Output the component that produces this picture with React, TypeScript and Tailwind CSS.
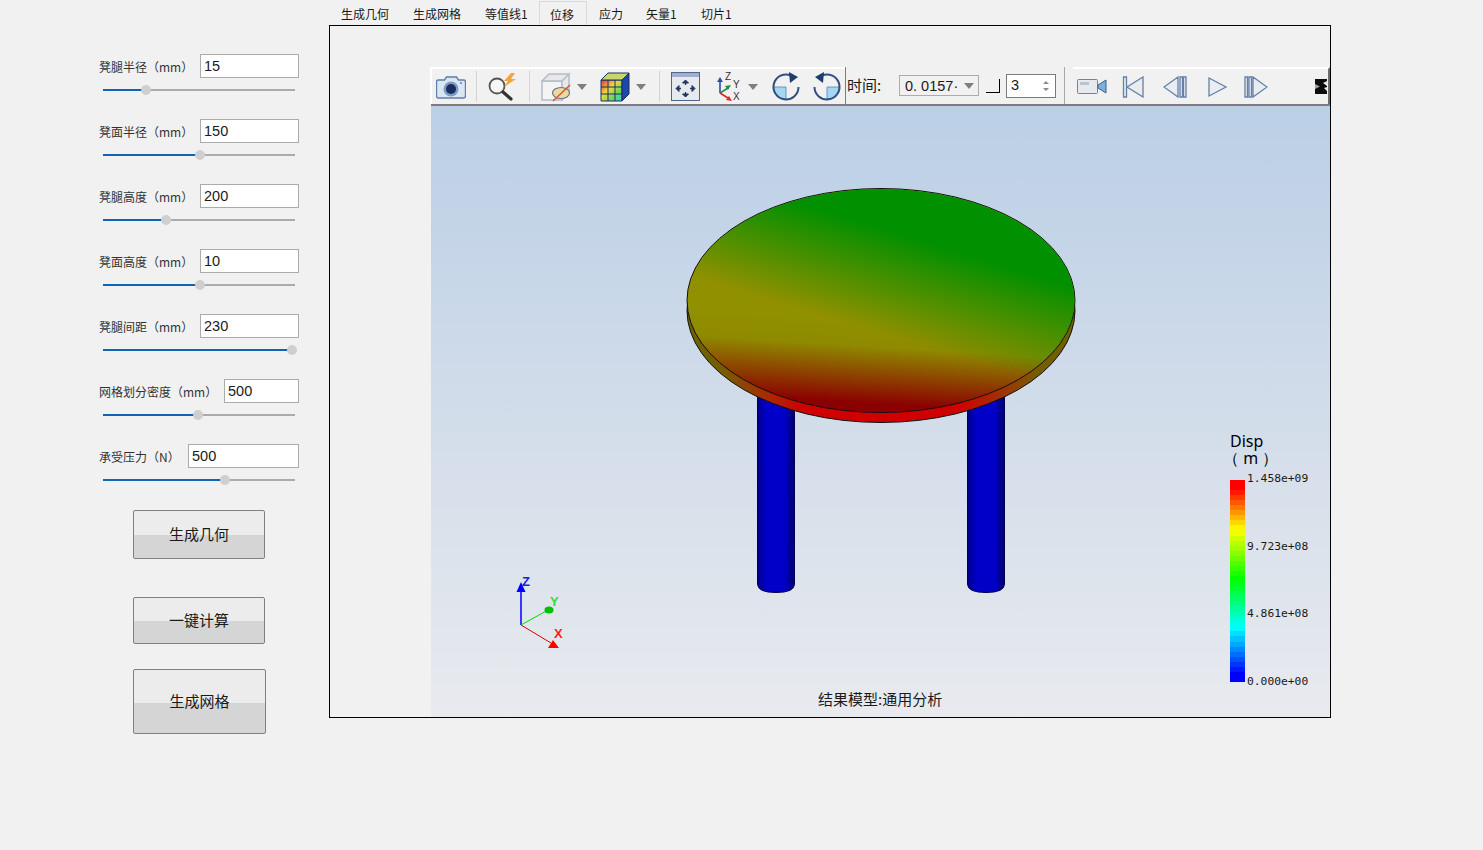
import React from "react";

const cjk = "font-['Noto_Sans_CJK_SC','Noto_Sans',sans-serif]";

const fields = [
  { label: "凳腿半径（mm）", value: "15", thumb: 43, w: "w-[99px]" },
  { label: "凳面半径（mm）", value: "150", thumb: 97, w: "w-[99px]" },
  { label: "凳腿高度（mm）", value: "200", thumb: 63, w: "w-[99px]" },
  { label: "凳面高度（mm）", value: "10", thumb: 97, w: "w-[99px]" },
  { label: "凳腿间距（mm）", value: "230", thumb: 189, w: "w-[99px]" },
  { label: "网格划分密度（mm）", value: "500", thumb: 95, w: "w-[75px]" },
  { label: "承受压力（N）", value: "500", thumb: 122, w: "w-[111px]" },
];

const tabs = [
  { name: "生成几何", cls: "w-[72px] pl-[12px]" },
  { name: "生成网格", cls: "w-[72px] pl-[12px]" },
  { name: "等值线1", cls: "w-[66px] pl-[12px]" },
  { name: "位移", cls: "w-[48px] pl-[10px] border border-b-0 border-[#d9d9d9]" },
  { name: "应力", cls: "w-[47px] pl-[12px]" },
  { name: "矢量1", cls: "w-[55px] pl-[12px]" },
  { name: "切片1", cls: "w-[54px] pl-[12px]" },
];

const ramp = [
  [0, [255, 0, 0]],
  [0.03, [255, 0, 0]],
  [0.24, [255, 255, 0]],
  [0.49, [0, 255, 0]],
  [0.74, [0, 255, 255]],
  [0.97, [0, 0, 255]],
  [1, [0, 0, 255]],
] as [number, number[]][];

function rampColor(t: number) {
  for (let i = 1; i < ramp.length; i++) {
    if (t <= ramp[i][0]) {
      const [t0, c0] = ramp[i - 1];
      const [t1, c1] = ramp[i];
      const k = (t - t0) / (t1 - t0 || 1);
      return `rgb(${c0.map((c, j) => Math.round(c + (c1[j] - c) * k)).join(",")})`;
    }
  }
  return "rgb(0,0,255)";
}

const legendBands = Array.from({ length: 40 }, (_, i) => rampColor(i / 39));

const Sep = ({ ml }: { ml: string }) => <div className={`${ml} w-px h-[31px] bg-[#d4d4d4] shrink-0`} />;

const Caret = ({ className }: { className: string }) => (
  <svg viewBox="0 0 10 6" className={`w-[10px] h-[6px] shrink-0 ${className}`}>
    <path d="M0 0h10L5 6z" fill="#7f7f7f" />
  </svg>
);

const CameraIcon = () => (
  <svg viewBox="0 0 30 26" className="w-[30px] h-[26px] shrink-0 ml-[4px]">
    <path d="M2 6h6l2-3h10l2 3h5a2 2 0 0 1 2 2v14a2 2 0 0 1-2 2H2a2 2 0 0 1-2-2V8a2 2 0 0 1 2-2z" transform="translate(.5 0)" fill="#dbe6f4" stroke="#5f7fa8" strokeWidth="1.4" />
    <circle cx="15" cy="15" r="7.5" fill="#7d9cc4" />
    <circle cx="15" cy="15" r="5" fill="#1b2f5e" />
    <circle cx="25" cy="9" r="1" fill="#5f7fa8" />
  </svg>
);

const SearchBoltIcon = () => (
  <svg viewBox="0 0 30 30" className="w-[30px] h-[30px] shrink-0 ml-[11px]">
    <circle cx="9" cy="14" r="7.500" fill="#f6f6f6" stroke="#555" strokeWidth="1.800" />
    <path d="M15 20l8 7" stroke="#333" strokeWidth="3.200" strokeLinecap="round" />
    <path d="M23 1l-7 8h4l-4 6 12-8h-5l4-6z" fill="#f0a43a" />
  </svg>
);

const ClipCubeIcon = () => (
  <svg viewBox="0 0 30 30" className="w-[30px] h-[30px] shrink-0 ml-[11px]">
    <path d="M1 9h20v19H1z" fill="#f4f4f4" stroke="#b4bcc8" strokeWidth="1.500" />
    <path d="M1 9l7-7h20l-7 7zM21 9l7-7v19l-7 7z" fill="#e8e8e8" stroke="#b4bcc8" strokeWidth="1.500" />
    <ellipse cx="20" cy="21" rx="8.500" ry="5.500" fill="#ecd9a0" stroke="#64748b" strokeWidth="1.200" />
    <path d="M12 29L29 13" stroke="#d8552b" strokeWidth="1.300" />
  </svg>
);

const ColorCubeIcon = () => (
  <svg viewBox="0 0 30 30" className="w-[30px] h-[30px] shrink-0 ml-[13px]">
    <defs>
      <linearGradient id="cubeFace" x1="0" y1="0" x2="1" y2="1">
        <stop offset="0" stopColor="#e0342c" />
        <stop offset="0.4" stopColor="#f2d83a" />
        <stop offset="0.7" stopColor="#6ed65a" />
        <stop offset="1" stopColor="#39c7e0" />
      </linearGradient>
    </defs>
    <path d="M1 8h21v21H1z" fill="url(#cubeFace)" stroke="#1d2f66" strokeWidth="1" />
    <path d="M1 8l7-7h21l-7 7z" fill="#c8d66a" stroke="#1d2f66" strokeWidth="1" />
    <path d="M22 8l7-7v21l-7 7z" fill="#1d47a8" stroke="#1d2f66" strokeWidth="1" />
    <path d="M8 8v21M15 8v21M1 15h21M1 22h21" stroke="#1d2f66" strokeWidth="1" />
  </svg>
);

const FitIcon = () => (
  <svg viewBox="0 0 30 29" className="w-[30px] h-[29px] shrink-0 ml-[11px]">
    <rect x=".5" y=".5" width="28" height="28" fill="#e6e9ee" stroke="#4f668c" />
    <rect x="1" y="1" width="27" height="4" fill="#9fb0c8" />
    <g fill="#1f3560" stroke="#1f3560" strokeWidth="1">
      <path d="M14.5 8l-3 3h6zM14.5 25l-3-3h6zM5 16.5l3-3v6zM24 16.5l-3-3v6z" />
    </g>
    <path d="M14.5 10v3M14.5 20v3M7 16.5h3M19 16.5h3" stroke="#1f3560" strokeWidth="1.300" />
  </svg>
);

const AxesIcon = () => (
  <svg viewBox="0 0 30 30" className="w-[30px] h-[30px] shrink-0 ml-[13px]">
    <path d="M6 21V9" stroke="#2b4fa8" strokeWidth="1.600" />
    <path d="M6 5l-3 5h6z" fill="#2b4fa8" />
    <path d="M6 21l8-5" stroke="#1f8f4a" strokeWidth="1.600" />
    <path d="M17 13l-6 1 3 4z" fill="#1f8f4a" />
    <path d="M6 21l8 5" stroke="#e0262b" strokeWidth="1.600" />
    <path d="M18 29l-6-1 3-4z" fill="#e0262b" />
    <g className="font-['Liberation_Sans',sans-serif]" fontSize="10" fill="#333">
      <text x="11" y="8">Z</text>
      <text x="19" y="16">Y</text>
      <text x="19" y="28">X</text>
    </g>
  </svg>
);

const RotateIcon = ({ ml, flip }: { ml: string; flip?: boolean }) => (
  <svg viewBox="0 0 30 30" className={`w-[30px] h-[30px] shrink-0 ${ml} ${flip ? "-scale-x-100" : ""}`}>
    <path d="M15 15H2.500A12.500 12.500 0 0 0 15 27.500z" fill="#a6d6f2" stroke="#4b86b8" strokeWidth=".8" />
    <path d="M27.500 15A12.500 12.500 0 1 1 20 3.500" fill="none" stroke="#2f4f7f" strokeWidth="2" />
    <path d="M18 0l9 5-8 6z" fill="#1f3e6e" />
  </svg>
);

const RecordIcon = () => (
  <svg viewBox="0 0 30 18" className="w-[30px] h-[18px] shrink-0 ml-[4px]">
    <rect x=".5" y="1.500" width="20" height="14" rx="1" fill="#e6e9ee" stroke="#6a83a8" />
    <rect x="3" y="4" width="9" height="3" fill="#b9c3d2" />
    <path d="M21 7l8-5v13l-8-5z" fill="#7fb0dc" stroke="#3d5f8f" />
  </svg>
);

const Transport = ({ d, ml }: { d: string; ml: string }) => (
  <svg viewBox="0 0 24 22" className={`w-[24px] h-[22px] shrink-0 ${ml}`}>
    <path d={d} fill="#e9edf2" stroke="#6580a6" strokeWidth="1.300" />
  </svg>
);

const Model = () => (
  <svg viewBox="431 106 899 611" className="absolute inset-0 w-full h-full">
    <defs>
      {/* olive to red runs level, the green wash on top of it leans */}
      <linearGradient id="seatBase" gradientUnits="userSpaceOnUse" x1="885" y1="300" x2="878" y2="412">
        <stop offset="0.2" stopColor="#909000" />
        <stop offset="0.42" stopColor="#8f8a00" />
        <stop offset="0.93" stopColor="#8b0000" />
      </linearGradient>
      <linearGradient id="seatGreen" gradientUnits="userSpaceOnUse" x1="925" y1="205" x2="885" y2="335">
        <stop offset="0.25" stopColor="#009000" />
        <stop offset="1" stopColor="#009000" stopOpacity="0" />
      </linearGradient>
      <linearGradient id="seatEdge" gradientUnits="userSpaceOnUse" x1="687" y1="0" x2="1075" y2="0">
        <stop offset="0" stopColor="#6b6200" />
        <stop offset="0.1" stopColor="#7a5a00" />
        <stop offset="0.3" stopColor="#d00000" />
        <stop offset="0.7" stopColor="#d00000" />
        <stop offset="0.9" stopColor="#7a5a00" />
        <stop offset="1" stopColor="#6b6200" />
      </linearGradient>
      <linearGradient id="leg" x1="0" y1="0" x2="1" y2="0">
        <stop offset="0" stopColor="#00008c" />
        <stop offset="0.25" stopColor="#0000c8" />
        <stop offset="0.75" stopColor="#0000c8" />
        <stop offset="0.85" stopColor="#00009a" />
        <stop offset="1" stopColor="#000078" />
      </linearGradient>
    </defs>
    <path d="M757.500 390V584Q757.500 592.500 776 592.500T794.500 584V390Z" fill="url(#leg)" stroke="#000050" />
    <path d="M967.500 390V584Q967.500 592.500 986 592.500T1004.500 584V390Z" fill="url(#leg)" stroke="#000050" />
    <ellipse cx="881" cy="310.500" rx="194" ry="112" fill="url(#seatEdge)" stroke="#111" strokeWidth="1" />
    <ellipse cx="881" cy="300.500" rx="194" ry="112" fill="url(#seatBase)" stroke="#111" strokeWidth="1" />
    <ellipse cx="881" cy="300.500" rx="193.500" ry="111.500" fill="url(#seatGreen)" />

    {/* coordinate triad */}
    <path d="M521 625V590" stroke="#0000ff" strokeWidth="1.500" />
    <path d="M521 582l-4.500 10h9z" fill="#0000ff" />
    <path d="M521 625l27-15" stroke="#00e000" strokeWidth="1" />
    <ellipse cx="549" cy="610" rx="4.500" ry="3.500" fill="#00c000" />
    <path d="M521 625l30 18" stroke="#e00000" strokeWidth="1" />
    <path d="M548 648l5-8 6 8z" fill="#ff0000" />
    <g className="font-['Liberation_Sans',sans-serif]" fontSize="13" fontWeight="700">
      <text x="522" y="586" fill="#2020e0">Z</text>
      <text x="550" y="606" fill="#30e030">Y</text>
      <text x="554" y="638" fill="#ff2020">X</text>
    </g>
  </svg>
);

export default function App() {
  return (
    <div className={`w-[1483px] h-[850px] flex bg-[#f1f1f1] text-[#1a1a1a] overflow-hidden ${cjk}`}>
      {/* parameter column */}
      <aside className="w-[329px] shrink-0 pt-[54px] pl-[99px] pr-[30px]">
        {fields.map((f) => (
          <div key={f.label} className="h-[65px]">
            <div className="flex items-center justify-between h-[24px]">
              <span className="text-[12px] pt-[1px] whitespace-nowrap text-[#333]">{f.label}</span>
              <div className={`${f.w} h-[24px] border border-[#ababab] bg-white pl-[3px] pt-[1px] flex items-center text-[14.5px] font-['Liberation_Sans',sans-serif]`}>
                {f.value}
              </div>
            </div>
            <div className="flex items-center w-[192px] ml-[4px] mt-[7px] h-[10px]">
              <div className="h-[2px] bg-[#0f64b4]" style={{ width: f.thumb }} />
              <div className="w-[10px] h-[10px] rounded-full bg-[#cfcfcf] shrink-0 -mx-[5px] relative" />
              <div className="h-[2px] bg-[#ababab] flex-1" />
            </div>
          </div>
        ))}
        <button className="block ml-[34px] mt-[1px] w-[132px] h-[49px] rounded-[2px] border border-[#808080] text-[15px] bg-[linear-gradient(#ececec_51%,#d5d5d5_51%)]">
          生成几何
        </button>
        <button className="block ml-[34px] mt-[38px] w-[132px] h-[47px] rounded-[2px] border border-[#808080] text-[15px] bg-[linear-gradient(#ececec_51%,#d5d5d5_51%)]">
          一键计算
        </button>
        <button className="block ml-[34px] mt-[25px] w-[133px] h-[65px] rounded-[2px] border border-[#808080] text-[15px] bg-[linear-gradient(#ececec_52%,#d5d5d5_52%)]">
          生成网格
        </button>
      </aside>

      {/* result area */}
      <main className="w-[1002px] shrink-0 flex flex-col">
        <div className="flex h-[25px] pt-[1px] items-stretch text-[12px]">
          {tabs.map((t) => (
            <div key={t.name} className={`${t.cls} pt-[4px] leading-[17px] whitespace-nowrap`}>
              {t.name}
            </div>
          ))}
        </div>
        <div className="h-[693px] border border-black pt-[41px] pl-[101px] flex flex-col">
          {/* toolbar */}
          <div className="h-[39px] shrink-0 flex items-stretch bg-[#f1f1f1] border-b-2 border-[#7d7d7d]">
            <div className="w-[415px] flex items-center border-t-2 border-l-2 -ml-[1px] border-white shrink-0">
              <CameraIcon />
              <Sep ml="ml-[10px]" />
              <SearchBoltIcon />
              <Sep ml="ml-[11px]" />
              <ClipCubeIcon />
              <Caret className="ml-[6px]" />
              <ColorCubeIcon />
              <Caret className="ml-[6px]" />
              <Sep ml="ml-[13px]" />
              <FitIcon />
              <AxesIcon />
              <Caret className="ml-[4px]" />
              <RotateIcon ml="ml-[13px]" />
              <RotateIcon ml="ml-[11px]" flip />
            </div>
            <div className="w-[220px] shrink-0 flex items-center border-l border-[#7d7d7d] border-r border-r-[#a9a9a9] pl-[1px] text-[15px]">
              <span className="w-[52px] shrink-0">时间:</span>
              <div className="w-[80px] h-[21px] shrink-0 border border-[#adadad] flex items-center pl-[5px] pt-[1px] text-[14.5px] font-['Liberation_Sans',sans-serif] whitespace-pre">
                <span className="w-[58px] h-[18px] leading-[18px] overflow-hidden">0. 0157·</span>
                <Caret className="ml-[1px]" />
              </div>
              <div className="w-[14px] h-[14px] shrink-0 ml-[7px] border-r border-b border-black" />
              <div className="w-[50px] h-[24px] shrink-0 ml-[6px] border border-[#7a7a7a] bg-white flex items-center justify-between pl-[4px] pr-[6px] text-[14.5px] font-['Liberation_Sans',sans-serif]">
                3
                <svg viewBox="0 0 6 12" className="w-[6px] h-[12px]">
                  <path d="M3 1l3 3H0zM3 11l3-3H0z" fill="#8a8a8a" />
                </svg>
              </div>
            </div>
            <div className="flex-1 ml-[8px] flex items-center border-t-2 border-white border-r-2 border-r-[#6e6e6e] pr-[1px]">
              <RecordIcon />
              <Transport d="M1.500 1v20h3V1zM5 11L21 1v20z" ml="ml-[15px]" />
              <Transport d="M1 11L15 1v20zM17 1v20h2.500V1zM20.500 1v20h2.500V1z" ml="ml-[17px]" />
              <Transport d="M4 2v18l17-9z" ml="ml-[18px]" />
              <Transport d="M1 1v20h2.500V1zM5 1v20h2.500V1zM9 1v20l14-10z" ml="ml-[15px]" />
              <svg viewBox="0 0 12 17" className="w-[12px] h-[17px] ml-auto shrink-0">
                <path d="M0 1h12v15H0z" fill="#0c0c0c" />
                <path d="M0 6l5 2.500-5 2.500z" fill="#a0a0a0" />
                <path d="M12 3l-4 2 4 3zM12 13l-3-3 3-1z" fill="#e8e8e8" />
              </svg>
            </div>
          </div>

          {/* 3D view */}
          <div className="relative flex-1 bg-[linear-gradient(#bbcfe6,#e8eaee)] overflow-hidden">
            <Model />
            {/* scale bar */}
            <div className="absolute left-[799px] top-[327px] text-[16px] leading-[17px] text-black font-['Noto_Sans',sans-serif]">
              <div>Disp</div>
              <div className="-ml-[7px] whitespace-nowrap">（ m ）</div>
            </div>
            <div className="absolute left-[799px] top-[374px] h-[202px] w-[15px] flex flex-col">
              {legendBands.map((c, i) => (
                <div key={i} className="flex-1" style={{ backgroundColor: c }} />
              ))}
            </div>
            <div className="absolute left-[816px] top-[365px] h-[218px] flex flex-col justify-between text-[11.3px] leading-[15px] font-['DejaVu_Sans_Mono',monospace]">
              <span>1.458e+09</span>
              <span>9.723e+08</span>
              <span>4.861e+08</span>
              <span>0.000e+00</span>
            </div>
            <div className="absolute left-[387px] top-[583px] text-[15px] leading-[20px] whitespace-nowrap">结果模型:通用分析</div>
          </div>
        </div>
      </main>
    </div>
  );
}
